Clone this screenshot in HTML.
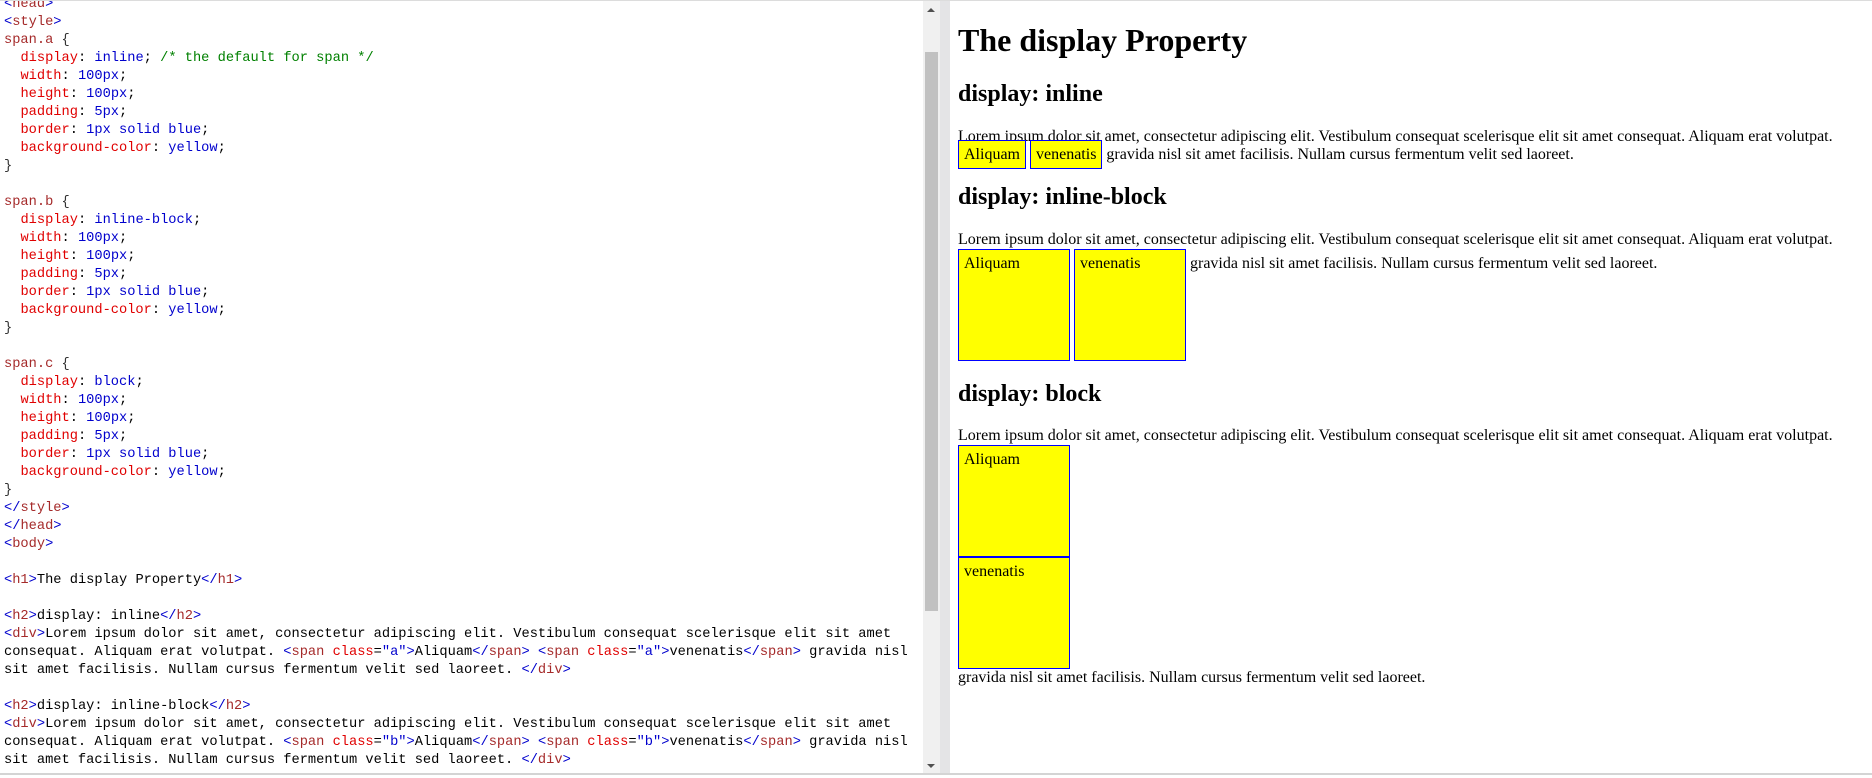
<!DOCTYPE html>
<html><head><style>
html,body{margin:0;padding:0;width:1872px;height:778px;overflow:hidden;background:#fff}
#left{position:absolute;left:0;top:0;width:923px;height:773px;overflow:hidden;background:#fff}
#left pre{position:absolute;left:4px;top:-4px;margin:0;font-family:"Liberation Mono",monospace;font-size:13.7px;line-height:18px;color:#000;letter-spacing:0}
.t{color:#0000cd}.n{color:#a52a2a}.p{color:#e00000}.v{color:#0000cd}.c{color:#008000}.s{color:#a52a2a}.a{color:#e00000}.b{color:#333}
#sb{position:absolute;left:923px;top:0;width:17px;height:773px;background:#f0f0f0}
#thumb{position:absolute;left:2px;top:52px;width:13px;height:559px;background:#c1c1c1}
#up{position:absolute;left:4px;top:8px;width:0;height:0;border-left:4px solid transparent;border-right:4px solid transparent;border-bottom:4px solid #505050}
#dn{position:absolute;left:4px;top:764px;width:0;height:0;border-left:4px solid transparent;border-right:4px solid transparent;border-top:4px solid #505050}
#div{position:absolute;left:940px;top:0;width:10px;height:775px;background:#e4e4e6}
#topl{position:absolute;left:0;top:0;width:1872px;height:1px;background:#dcdcdc;z-index:5}
#botl{position:absolute;left:0;top:773px;width:1872px;height:2px;background:#d4d4d4;z-index:5}
#right{position:absolute;left:950px;top:1px;width:922px;height:772px;overflow:hidden;background:#fff;font-family:"Liberation Serif",serif;font-size:16px;color:#000}
#right .body{margin:8px}
#right h1{font-size:32px;margin:21.44px 0;line-height:normal}
#right h2{font-size:24px;margin:19.92px 0;line-height:normal}
span.a2{display:inline;width:100px;height:100px;padding:5px;border:1px solid blue;background:yellow}
span.b2{display:inline-block;width:100px;height:100px;padding:5px;border:1px solid blue;background:yellow}
span.c2{display:block;width:100px;height:100px;padding:5px;border:1px solid blue;background:yellow}
</style></head><body>
<div id="topl"></div>
<div id="left"><pre><span class="t">&lt;</span><span class="n">head</span><span class="t">&gt;</span>
<span class="t">&lt;</span><span class="n">style</span><span class="t">&gt;</span>
<span class="s">span.a</span> <span class="b">{</span>
  <span class="p">display</span>: <span class="v">inline</span>; <span class="c">/* the default for span */</span>
  <span class="p">width</span>: <span class="v">100px</span>;
  <span class="p">height</span>: <span class="v">100px</span>;
  <span class="p">padding</span>: <span class="v">5px</span>;
  <span class="p">border</span>: <span class="v">1px solid blue</span>;
  <span class="p">background-color</span>: <span class="v">yellow</span>;
<span class="b">}</span>

<span class="s">span.b</span> <span class="b">{</span>
  <span class="p">display</span>: <span class="v">inline-block</span>;
  <span class="p">width</span>: <span class="v">100px</span>;
  <span class="p">height</span>: <span class="v">100px</span>;
  <span class="p">padding</span>: <span class="v">5px</span>;
  <span class="p">border</span>: <span class="v">1px solid blue</span>;
  <span class="p">background-color</span>: <span class="v">yellow</span>;
<span class="b">}</span>

<span class="s">span.c</span> <span class="b">{</span>
  <span class="p">display</span>: <span class="v">block</span>;
  <span class="p">width</span>: <span class="v">100px</span>;
  <span class="p">height</span>: <span class="v">100px</span>;
  <span class="p">padding</span>: <span class="v">5px</span>;
  <span class="p">border</span>: <span class="v">1px solid blue</span>;
  <span class="p">background-color</span>: <span class="v">yellow</span>;
<span class="b">}</span>
<span class="t">&lt;/</span><span class="n">style</span><span class="t">&gt;</span>
<span class="t">&lt;/</span><span class="n">head</span><span class="t">&gt;</span>
<span class="t">&lt;</span><span class="n">body</span><span class="t">&gt;</span>

<span class="t">&lt;</span><span class="n">h1</span><span class="t">&gt;</span>The display Property<span class="t">&lt;/</span><span class="n">h1</span><span class="t">&gt;</span>

<span class="t">&lt;</span><span class="n">h2</span><span class="t">&gt;</span>display: inline<span class="t">&lt;/</span><span class="n">h2</span><span class="t">&gt;</span>
<span class="t">&lt;</span><span class="n">div</span><span class="t">&gt;</span>Lorem ipsum dolor sit amet, consectetur adipiscing elit. Vestibulum consequat scelerisque elit sit amet
consequat. Aliquam erat volutpat. <span class="t">&lt;</span><span class="n">span</span> <span class="a">class</span>=<span class="v">"a"</span><span class="t">&gt;</span>Aliquam<span class="t">&lt;/</span><span class="n">span</span><span class="t">&gt;</span> <span class="t">&lt;</span><span class="n">span</span> <span class="a">class</span>=<span class="v">"a"</span><span class="t">&gt;</span>venenatis<span class="t">&lt;/</span><span class="n">span</span><span class="t">&gt;</span> gravida nisl
sit amet facilisis. Nullam cursus fermentum velit sed laoreet. <span class="t">&lt;/</span><span class="n">div</span><span class="t">&gt;</span>

<span class="t">&lt;</span><span class="n">h2</span><span class="t">&gt;</span>display: inline-block<span class="t">&lt;/</span><span class="n">h2</span><span class="t">&gt;</span>
<span class="t">&lt;</span><span class="n">div</span><span class="t">&gt;</span>Lorem ipsum dolor sit amet, consectetur adipiscing elit. Vestibulum consequat scelerisque elit sit amet
consequat. Aliquam erat volutpat. <span class="t">&lt;</span><span class="n">span</span> <span class="a">class</span>=<span class="v">"b"</span><span class="t">&gt;</span>Aliquam<span class="t">&lt;/</span><span class="n">span</span><span class="t">&gt;</span> <span class="t">&lt;</span><span class="n">span</span> <span class="a">class</span>=<span class="v">"b"</span><span class="t">&gt;</span>venenatis<span class="t">&lt;/</span><span class="n">span</span><span class="t">&gt;</span> gravida nisl
sit amet facilisis. Nullam cursus fermentum velit sed laoreet. <span class="t">&lt;/</span><span class="n">div</span><span class="t">&gt;</span>
</pre></div>
<div id="sb"><div id="up"></div><div id="thumb"></div><div id="dn"></div></div>
<div id="div"></div>
<div id="right"><div class="body">
<h1>The display Property</h1>
<h2>display: inline</h2>
<div>Lorem ipsum dolor sit amet, consectetur adipiscing elit. Vestibulum consequat scelerisque elit sit amet consequat. Aliquam erat volutpat. <span class="a2">Aliquam</span> <span class="a2">venenatis</span> gravida nisl sit amet facilisis. Nullam cursus fermentum velit sed laoreet.</div>
<h2>display: inline-block</h2>
<div>Lorem ipsum dolor sit amet, consectetur adipiscing elit. Vestibulum consequat scelerisque elit sit amet consequat. Aliquam erat volutpat. <span class="b2">Aliquam</span> <span class="b2">venenatis</span> gravida nisl sit amet facilisis. Nullam cursus fermentum velit sed laoreet.</div>
<h2>display: block</h2>
<div>Lorem ipsum dolor sit amet, consectetur adipiscing elit. Vestibulum consequat scelerisque elit sit amet consequat. Aliquam erat volutpat. <span class="c2">Aliquam</span> <span class="c2">venenatis</span> gravida nisl sit amet facilisis. Nullam cursus fermentum velit sed laoreet.</div>
</div></div>
<div id="botl"></div>
</body></html>
